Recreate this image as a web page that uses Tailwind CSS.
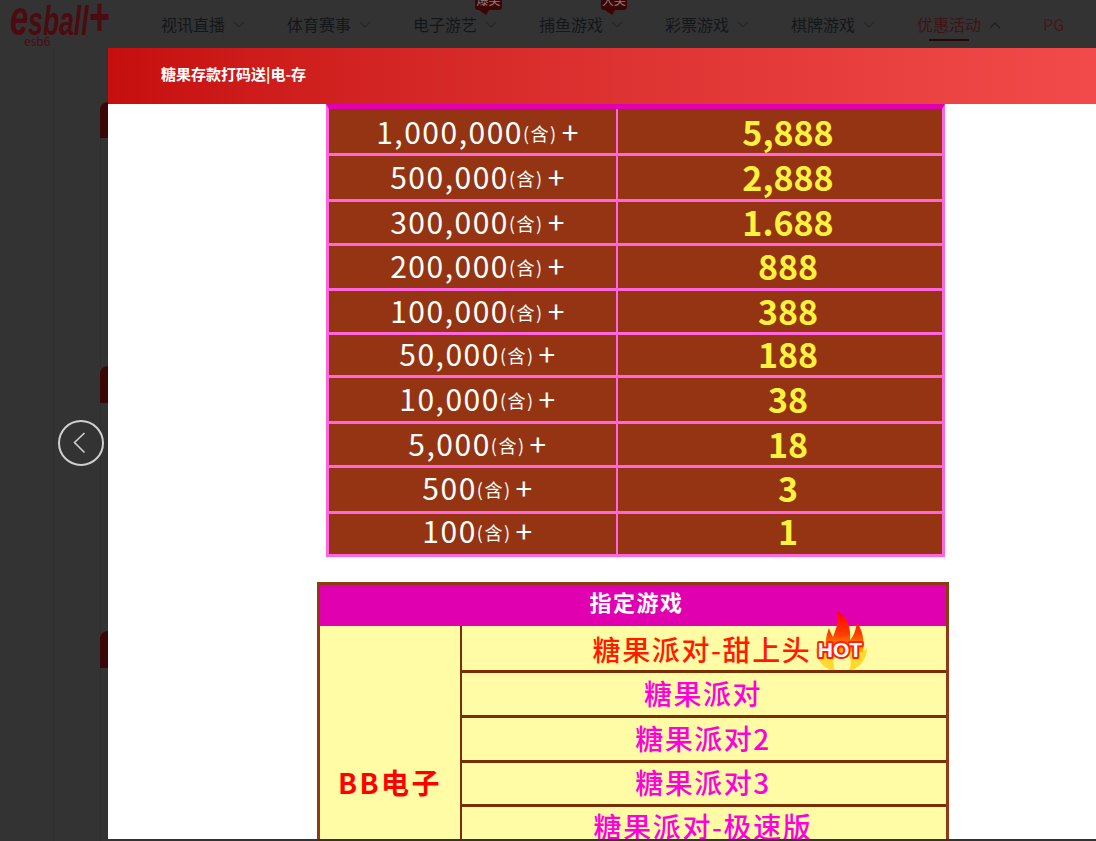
<!DOCTYPE html>
<html lang="zh-CN">
<head>
    <meta charset="UTF-8">
    <meta name="viewport" content="width=device-width, initial-scale=1.0">
    <title>优惠活动</title>
    <script src="https://cdn.jsdelivr.net/npm/@tailwindcss/browser@4"></script>
</head>
<body class="bg-[#333333] overflow-hidden">
<div class="relative w-[1096px] h-[841px] overflow-hidden bg-[#333333] font-['Noto_Sans_CJK_SC',sans-serif]">

    <!-- Dimmed site header -->
    <header class="flex h-[48px]">
        <div class="relative w-[161px] shrink-0">
            <div class="absolute left-[10px] top-[-3px] flex items-baseline origin-left scale-x-[0.66] text-[#4c0b10] font-['Liberation_Sans',sans-serif] font-bold italic leading-[38px]">
                <span class="text-[50px]">e</span><span class="text-[40px]">sball</span><span class="text-[54px]">+</span>
            </div>
            <div class="absolute left-[24px] top-[34px] text-[#4c0b10] text-[12px] leading-[14px]">esb6</div>
        </div>
        <nav class="flex text-[16px] leading-[26px] text-[#14171a] pt-[11px]">
            <div class="relative flex w-[126px] items-start">视讯直播<svg class="ml-[8px] mt-[10px]" width="12" height="8" viewBox="0 0 12 8" fill="none" stroke="#25272a" stroke-width="1.2"><path d="M1 1l5 5 5-5"/></svg></div>
            <div class="relative flex w-[126px] items-start">体育赛事<svg class="ml-[8px] mt-[10px]" width="12" height="8" viewBox="0 0 12 8" fill="none" stroke="#25272a" stroke-width="1.2"><path d="M1 1l5 5 5-5"/></svg></div>
            <div class="relative flex w-[126px] items-start">电子游艺<svg class="ml-[8px] mt-[10px]" width="12" height="8" viewBox="0 0 12 8" fill="none" stroke="#25272a" stroke-width="1.2"><path d="M1 1l5 5 5-5"/></svg>
                <span class="absolute left-[62px] top-[-15px] w-[27px] h-[14px] rounded-[3px] bg-[#3c0505] text-[#8d7b7b] text-[12px] leading-[8px] text-center overflow-hidden">爆奖</span>
                <span class="absolute left-[66px] top-[-1px] w-0 h-0 border-t-[5px] border-t-[#3c0505] border-l-[7px] border-l-transparent border-r-[3px] border-r-transparent"></span>
            </div>
            <div class="relative flex w-[126px] items-start">捕鱼游戏<svg class="ml-[8px] mt-[10px]" width="12" height="8" viewBox="0 0 12 8" fill="none" stroke="#25272a" stroke-width="1.2"><path d="M1 1l5 5 5-5"/></svg>
                <span class="absolute left-[62px] top-[-15px] w-[26px] h-[14px] rounded-[3px] bg-[#3c0505] text-[#8d7b7b] text-[12px] leading-[8px] text-center overflow-hidden">大奖</span>
                <span class="absolute left-[66px] top-[-1px] w-0 h-0 border-t-[5px] border-t-[#3c0505] border-l-[7px] border-l-transparent border-r-[3px] border-r-transparent"></span>
            </div>
            <div class="relative flex w-[126px] items-start">彩票游戏<svg class="ml-[8px] mt-[10px]" width="12" height="8" viewBox="0 0 12 8" fill="none" stroke="#25272a" stroke-width="1.2"><path d="M1 1l5 5 5-5"/></svg></div>
            <div class="relative flex w-[126px] items-start">棋牌游戏<svg class="ml-[8px] mt-[10px]" width="12" height="8" viewBox="0 0 12 8" fill="none" stroke="#25272a" stroke-width="1.2"><path d="M1 1l5 5 5-5"/></svg></div>
            <div class="relative flex w-[126px] items-start text-[#3f1416]">优惠活动<svg class="ml-[8px] mt-[10px]" width="12" height="8" viewBox="0 0 12 8" fill="none" stroke="#1f1f1f" stroke-width="1.3"><path d="M1 7l5-5 5 5"/></svg>
                <span class="absolute left-[12px] top-[28px] w-[40px] h-[2px] bg-[#2a0606]"></span>
            </div>
            <div class="text-[#4a1619]">PG</div>
        </nav>
    </header>

    <!-- Dimmed page content behind the dialog -->
    <div class="absolute left-[53px] top-[48px] bottom-0 w-px bg-[#2f2f2f]"></div>
    <div class="absolute left-[100px] top-[138px] bottom-0 w-px bg-[#2f2f2f]"></div>
    <div class="absolute left-[100px] top-[102px] w-[8px] h-[36px] rounded-tl-[8px] bg-[#3a0606]"></div>
    <div class="absolute left-[100px] top-[366px] w-[8px] h-[37px] rounded-tl-[8px] bg-[#3a0606]"></div>
    <div class="absolute left-[100px] top-[631px] w-[8px] h-[37px] rounded-tl-[8px] bg-[#3a0606]"></div>

    <!-- Previous arrow -->
    <button class="absolute left-[58px] top-[420px] flex items-center justify-center w-[46px] h-[46px] rounded-full border-2 border-[#cfcfcf]">
        <svg width="14" height="22" viewBox="0 0 14 22" fill="none" stroke="#cfcfcf" stroke-width="1.6" class="mr-[3px]"><path d="M11.500 1 1.500 10.500 11.500 20.500"/></svg>
    </button>

    <!-- Dialog -->
    <section class="absolute left-[108px] top-[48px] right-0 bottom-[2px] flex flex-col bg-white">
        <div class="flex items-center h-[56px] shrink-0 pl-[53px] pb-[3px] bg-linear-to-r from-[#c60e0e] to-[#f24a4a] text-white text-[15px] font-bold">糖果存款打码送|电-存</div>

        <div class="flex-1 overflow-hidden">
            <!-- Bonus table -->
            <div class="ml-[218px] w-[619px] border-x-[3px] border-b-[3px] border-[#ff66dd] border-t-[5px] border-t-[#e000b0] bg-[#943412] text-center">
                <div class="flex h-[47px] border-b-[3px] border-[#ff66dd]">
                    <div class="flex items-center justify-center w-[289px] pl-[11px] border-r-2 border-[#ff66dd] text-white text-[30px] tracking-[1.500px]">1,000,000<span class="text-[18px] mt-[4px] mr-[4px]">(含)</span>+</div>
                    <div class="flex-1 flex items-center justify-center pl-[16px] text-[#fff23c] text-[34px] font-bold">5,888</div>
                </div>
                <div class="flex h-[46px] border-b-[3px] border-[#ff66dd]">
                    <div class="flex items-center justify-center w-[289px] pl-[11px] pb-[3px] border-r-2 border-[#ff66dd] text-white text-[30px] tracking-[1.500px]">500,000<span class="text-[18px] mt-[4px] mr-[4px]">(含)</span>+</div>
                    <div class="flex-1 flex items-center justify-center pl-[16px] pb-[3px] text-[#fff23c] text-[34px] font-bold">2,888</div>
                </div>
                <div class="flex h-[44px] border-b-[3px] border-[#ff66dd]">
                    <div class="flex items-center justify-center w-[289px] pl-[11px] pb-[3px] border-r-2 border-[#ff66dd] text-white text-[30px] tracking-[1.500px]">300,000<span class="text-[18px] mt-[4px] mr-[4px]">(含)</span>+</div>
                    <div class="flex-1 flex items-center justify-center pl-[16px] pb-[3px] text-[#fff23c] text-[34px] font-bold">1.688</div>
                </div>
                <div class="flex h-[45px] border-b-[3px] border-[#ff66dd]">
                    <div class="flex items-center justify-center w-[289px] pl-[11px] pb-[3px] border-r-2 border-[#ff66dd] text-white text-[30px] tracking-[1.500px]">200,000<span class="text-[18px] mt-[4px] mr-[4px]">(含)</span>+</div>
                    <div class="flex-1 flex items-center justify-center pl-[16px] pb-[3px] text-[#fff23c] text-[34px] font-bold">888</div>
                </div>
                <div class="flex h-[44px] border-b-[3px] border-[#ff66dd]">
                    <div class="flex items-center justify-center w-[289px] pl-[11px] pb-[3px] border-r-2 border-[#ff66dd] text-white text-[30px] tracking-[1.500px]">100,000<span class="text-[18px] mt-[4px] mr-[4px]">(含)</span>+</div>
                    <div class="flex-1 flex items-center justify-center pl-[16px] pb-[3px] text-[#fff23c] text-[34px] font-bold">388</div>
                </div>
                <div class="flex h-[43px] border-b-[3px] border-[#ff66dd]">
                    <div class="flex items-center justify-center w-[289px] pl-[11px] pb-[3px] border-r-2 border-[#ff66dd] text-white text-[30px] tracking-[1.500px]">50,000<span class="text-[18px] mt-[4px] mr-[4px]">(含)</span>+</div>
                    <div class="flex-1 flex items-center justify-center pl-[16px] pb-[3px] text-[#fff23c] text-[34px] font-bold">188</div>
                </div>
                <div class="flex h-[46px] border-b-[3px] border-[#ff66dd]">
                    <div class="flex items-center justify-center w-[289px] pl-[11px] pb-[3px] border-r-2 border-[#ff66dd] text-white text-[30px] tracking-[1.500px]">10,000<span class="text-[18px] mt-[4px] mr-[4px]">(含)</span>+</div>
                    <div class="flex-1 flex items-center justify-center pl-[16px] pb-[3px] text-[#fff23c] text-[34px] font-bold">38</div>
                </div>
                <div class="flex h-[44px] border-b-[3px] border-[#ff66dd]">
                    <div class="flex items-center justify-center w-[289px] pl-[11px] pb-[3px] border-r-2 border-[#ff66dd] text-white text-[30px] tracking-[1.500px]">5,000<span class="text-[18px] mt-[4px] mr-[4px]">(含)</span>+</div>
                    <div class="flex-1 flex items-center justify-center pl-[16px] pb-[3px] text-[#fff23c] text-[34px] font-bold">18</div>
                </div>
                <div class="flex h-[46px] border-b-[3px] border-[#ff66dd]">
                    <div class="flex items-center justify-center w-[289px] pl-[11px] pb-[5px] border-r-2 border-[#ff66dd] text-white text-[30px] tracking-[1.500px]">500<span class="text-[18px] mt-[4px] mr-[4px]">(含)</span>+</div>
                    <div class="flex-1 flex items-center justify-center pl-[16px] pb-[5px] text-[#fff23c] text-[34px] font-bold">3</div>
                </div>
                <div class="flex h-[40px]">
                    <div class="flex items-center justify-center w-[289px] pl-[11px] pb-[7px] border-r-2 border-[#ff66dd] text-white text-[30px] tracking-[1.500px]">100<span class="text-[18px] mt-[4px] mr-[4px]">(含)</span>+</div>
                    <div class="flex-1 flex items-center justify-center pl-[16px] pb-[7px] text-[#fff23c] text-[34px] font-bold">1</div>
                </div>
            </div>

            <!-- Game table -->
            <div class="ml-[209px] mt-[25px] w-[632px] border-[3px] border-[#8f3a12] text-center">
                <div class="flex items-center justify-center h-[41px] pl-[7px] pb-[8px] bg-[#e000b0] text-white text-[22px] font-bold tracking-[1.500px]">指定游戏</div>
                <div class="flex bg-[#fffca5]">
                    <div class="flex items-center justify-center w-[142px] pt-[86px] border-r-2 border-[#7a2e05] text-[#ff0000] text-[28px] font-bold tracking-[2.500px]">BB电子</div>
                    <div class="flex-1">
                        <div class="relative flex items-center justify-center h-[47px] pr-[4px] pt-[1px] border-b-[3px] border-[#7a2e05] text-[#ff1a00] text-[28px] font-medium tracking-[1.600px]">
                            <span>糖果派对-甜上头</span>
                            <!-- Hot badge -->
                            <svg class="absolute left-[353px] top-[-16px]" width="56" height="62" viewBox="0 0 56 62">
                                <defs>
                                    <linearGradient id="flame" x1="0" y1="0" x2="0" y2="1">
                                        <stop offset="0" stop-color="#ff0000"/>
                                        <stop offset="0.55" stop-color="#ff3a00"/>
                                        <stop offset="1" stop-color="#ffb000"/>
                                    </linearGradient>
                                </defs>
                                <path d="M1 38C4 41 7 42 10 40L44 40C47 42 50 41 52 38 52 48 46 56 38 60L15 60C7 56 0 48 1 38Z" fill="#ffd92b"/>
                                <path d="M20 60C17 54 18 48 22 44H32C36 48 37 54 34 60Z" fill="#fffca5"/>
                                <path d="M22 1C33 6 36 18 35 30 39 26 41 19 42 12 47 20 50 30 48 42L12 42C9 32 12 24 14 18 15 22 17 25 18 27 21 18 25 10 22 1Z" fill="url(#flame)"/>
                                <text x="25" y="47" text-anchor="middle" font-family="Liberation Sans, sans-serif" font-size="21" font-weight="700" letter-spacing="0" fill="#ffffff" stroke="#ff2000" stroke-width="4" paint-order="stroke" stroke-linejoin="round">HOT</text>
                            </svg>
                        </div>
                        <div class="flex items-center justify-center h-[45px] pr-[2px] pb-[3px] border-b-[3px] border-[#7a2e05] text-[#ff00dd] text-[28px] font-medium tracking-[1.500px]">糖果派对</div>
                        <div class="flex items-center justify-center h-[45px] pr-[2px] pb-[3px] border-b-[3px] border-[#7a2e05] text-[#ff00dd] text-[28px] font-medium tracking-[1.500px]">糖果派对2</div>
                        <div class="flex items-center justify-center h-[44px] pr-[2px] pb-[3px] border-b-[3px] border-[#7a2e05] text-[#ff00dd] text-[28px] font-medium tracking-[1.500px]">糖果派对3</div>
                        <div class="flex items-center justify-center h-[44px] pr-[2px] pb-[3px] border-b-[3px] border-[#7a2e05] text-[#ff00dd] text-[28px] font-medium tracking-[1.600px]">糖果派对-极速版</div>
                    </div>
                </div>
            </div>
        </div>
    </section>
</div>
</body>
</html>
